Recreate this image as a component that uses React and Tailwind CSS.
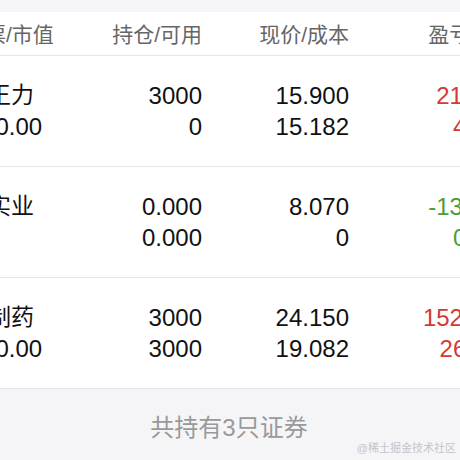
import React from "react";

const rows = [
	{
		name: "中国王力",
		value: "47700.00",
		hold: "3000",
		avail: "0",
		price: "15.900",
		cost: "15.182",
		pnl: "2154.00",
		pct: "4.73%",
		color: "text-[#d23b35]",
	},
	{
		name: "江苏实业",
		value: "0.00",
		hold: "0.000",
		avail: "0.000",
		price: "8.070",
		cost: "0",
		pnl: "-1306.00",
		pct: "0.00%",
		color: "text-[#4a9e35]",
	},
	{
		name: "华东制药",
		value: "72450.00",
		hold: "3000",
		avail: "3000",
		price: "24.150",
		cost: "19.082",
		pnl: "15204.00",
		pct: "26.56%",
		color: "text-[#d23b35]",
	},
];

function Row({ row }) {
	return (
		<div className="flex items-center h-[111px] border-b border-[#e6e6e8] text-[24px] leading-[31px] text-[#111]">
			<div className="w-[140px] shrink-0 flex flex-col">
				<div className="text-[23px]">{row.name}</div>
				<div className="whitespace-nowrap">{row.value === "0.00" ? "\u00a0" : row.value}</div>
			</div>
			<div className="w-[120px] shrink-0 flex flex-col items-end">
				<div>{row.hold}</div>
				<div>{row.avail}</div>
			</div>
			<div className="w-[147px] shrink-0 flex flex-col items-end">
				<div>{row.price}</div>
				<div>{row.cost}</div>
			</div>
			<div className={`w-[174px] shrink-0 flex flex-col items-end ${row.color}`}>
				<div>{row.pnl}</div>
				<div className="pr-[2px]">{row.pct}</div>
			</div>
		</div>
	);
}

export default function App() {
	return (
		<div
			className="relative w-[460px] h-[460px] overflow-hidden bg-[#f5f5f8]"
			style={{ fontFamily: '"Liberation Sans", "Noto Sans CJK SC", sans-serif' }}
		>
			<div className="h-[12px]" />
			<div className="bg-white -ml-[58px] w-[620px]">
				<div className="flex items-center h-[44px] pt-[2px] border-b border-[#e6e6e8] text-[21px] text-[#666]">
					<div className="w-[140px] shrink-0 pl-[22px] whitespace-nowrap">股票/市值</div>
					<div className="w-[120px] shrink-0 text-right whitespace-nowrap">持仓/可用</div>
					<div className="w-[147px] shrink-0 text-right whitespace-nowrap">现价/成本</div>
					<div className="w-[190px] shrink-0 text-right whitespace-nowrap">盈亏/盈亏率</div>
				</div>
				{rows.map((row) => (
					<Row key={row.name} row={row} />
				))}
			</div>
			<div className="flex justify-center pt-[21px] pr-[2px] text-[24px] text-[#999]">
				共持有3只证券
			</div>
			<div className="absolute right-[4px] bottom-[4px] text-[11px] text-[#c4c4c8]">
				@稀土掘金技术社区
			</div>
		</div>
	);
}
